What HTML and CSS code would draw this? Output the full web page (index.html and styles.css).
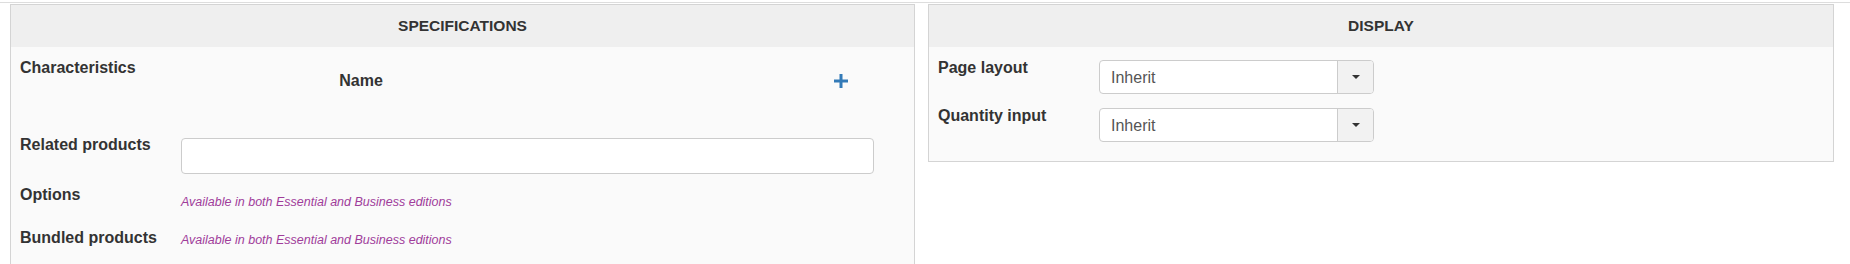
FILE: index.html
```html
<!DOCTYPE html>
<html>
<head>
<meta charset="utf-8">
<link rel="stylesheet" href="styles.css">
</head>
<body>
<div class="topbar"></div>
<div class="columns">
  <section class="panel panel-specs">
    <h2 class="panel-head">SPECIFICATIONS</h2>
    <div class="panel-body">
      <div class="row row-chars">
        <div class="label">Characteristics</div>
        <div class="char-table">
          <div class="th th-name">Name</div>
          <div class="th th-mid"></div>
          <div class="th th-add">
            <svg class="plus" width="14" height="14" viewBox="0 0 14 14"><rect x="5.5" y="0" width="3" height="14" fill="#337ab7"/><rect x="0" y="5.5" width="14" height="3" fill="#337ab7"/></svg>
          </div>
        </div>
      </div>
      <div class="row row-related">
        <div class="label">Related products</div>
        <div class="text-input"></div>
      </div>
      <div class="row row-options">
        <div class="label">Options</div>
        <div class="note note-options">Available in both Essential and Business editions</div>
      </div>
      <div class="row row-bundled">
        <div class="label">Bundled products</div>
        <div class="note note-bundled">Available in both Essential and Business editions</div>
      </div>
    </div>
  </section>
  <section class="panel panel-display">
    <h2 class="panel-head">DISPLAY</h2>
    <div class="panel-body display-body">
      <div class="row row-select">
        <div class="label">Page layout</div>
        <div class="select">
          <span class="select-value">Inherit</span>
          <span class="select-btn"><span class="caret"></span></span>
        </div>
      </div>
      <div class="row row-select row-select-last">
        <div class="label">Quantity input</div>
        <div class="select">
          <span class="select-value">Inherit</span>
          <span class="select-btn"><span class="caret"></span></span>
        </div>
      </div>
    </div>
  </section>
</div>
</body>
</html>
```
FILE: styles.css
```css
html, body {
  margin: 0;
  padding: 0;
  background: #ffffff;
  font-family: "Liberation Sans", Arial, sans-serif;
  color: #333333;
  overflow: hidden;
}

.topbar {
  height: 2px;
  border-bottom: 1px solid #dddddd;
}

.columns {
  display: grid;
  grid-template-columns: 905px 906px;
  column-gap: 13px;
  padding: 1px 16px 0 10px;
  align-items: start;
}

.panel {
  border: 1px solid #d4d4d4;
  background: #fafafa;
}

.panel-specs {
  height: 262px;
  overflow: hidden;
}

.panel-head {
  margin: 0;
  height: 42px;
  line-height: 42px;
  background: #efefef;
  text-align: center;
  font-size: 15.5px;
  font-weight: bold;
  color: #333333;
}

.panel-body {
  padding: 11px 9px 0 9px;
}

.display-body {
  padding-bottom: 19px;
}

.row {
  display: grid;
  grid-template-columns: 161px 693px;
}

.label {
  font-size: 16px;
  font-weight: bold;
  line-height: 20px;
  color: #333333;
}

.row-chars {
  height: 67px;
  margin-bottom: 10px;
}

.char-table {
  display: grid;
  grid-template-columns: 360px 266px 67px;
  padding-top: 13px;
}

.th {
  font-size: 16px;
  font-weight: bold;
  line-height: 20px;
  height: 20px;
}

.th-name {
  text-align: center;
}

.th-add {
  display: flex;
  align-items: center;
  justify-content: center;
}

.plus {
  display: block;
}

.row-related {
  margin-bottom: 11px;
}

.text-input {
  margin-top: 3px;
  height: 36px;
  box-sizing: border-box;
  border: 1px solid #cccccc;
  border-radius: 4px;
  background: #ffffff;
}

.note {
  font-size: 12.5px;
  font-style: italic;
  line-height: 20px;
  color: #a03d9a;
}

.row-options {
  height: 27px;
  margin-bottom: 16px;
}

.note-options {
  padding-top: 7px;
}

.note-bundled {
  padding-top: 2px;
}

.row-select {
  grid-template-columns: 161px 275px;
  margin-bottom: 12px;
}

.row-select-last {
  margin-bottom: 0;
}

.select {
  margin-top: 2px;
  height: 34px;
  box-sizing: border-box;
  border: 1px solid #cccccc;
  border-radius: 4px;
  background: #ffffff;
  display: flex;
  overflow: hidden;
}

.select-value {
  flex: 1;
  padding: 7px 0 0 11px;
  font-size: 16px;
  line-height: 20px;
  color: #555555;
}

.select-btn {
  width: 35px;
  border-left: 1px solid #cccccc;
  background: #f2f2f2;
  display: flex;
  align-items: center;
  justify-content: center;
}

.caret {
  width: 0;
  height: 0;
  border-left: 4px solid transparent;
  border-right: 4px solid transparent;
  border-top: 4px solid #333333;
}
```
